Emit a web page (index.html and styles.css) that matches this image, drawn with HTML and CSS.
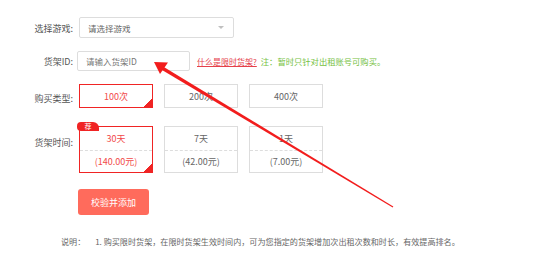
FILE: index.html
```html
<!DOCTYPE html>
<html lang="zh-CN">
<head>
    <meta charset="UTF-8">
    <title>购买限时货架</title>
    <link rel="stylesheet" href="styles.css">
</head>
<body>
    <div class="page">
        <div class="form-row row-game">
            <label class="form-label">选择游戏:</label>
            <div class="select">
                <span class="select-text">请选择游戏</span>
                <span class="caret"></span>
            </div>
        </div>

        <div class="form-row row-id">
            <label class="form-label">货架ID:</label>
            <input class="id-input" type="text" placeholder="请输入货架ID">
            <a class="help-link" href="#">什么是限时货架?</a>
            <span class="note">注：暂时只针对出租账号可购买。</span>
        </div>

        <div class="form-row row-type">
            <label class="form-label">购买类型:</label>
            <div class="option-list">
                <div class="option active">100次</div>
                <div class="option">200次</div>
                <div class="option">400次</div>
            </div>
        </div>

        <div class="form-row row-time">
            <label class="form-label">货架时间:</label>
            <div class="option-list">
                <div class="option time-option active">
                    <span class="badge">荐</span>
                    <div class="time-days">30天</div>
                    <div class="time-price">(140.00元)</div>
                </div>
                <div class="option time-option">
                    <div class="time-days">7天</div>
                    <div class="time-price">(42.00元)</div>
                </div>
                <div class="option time-option">
                    <div class="time-days">1天</div>
                    <div class="time-price">(7.00元)</div>
                </div>
            </div>
        </div>

        <button class="submit-btn" type="button">校验并添加</button>

        <p class="description">
            <span class="desc-title">说明：</span>
            <span>1. 购买限时货架，在限时货架生效时间内，可为您指定的货架增加次出租次数和时长，有效提高排名。</span>
        </p>

        <!-- annotation arrow drawn over the form -->
        <svg class="annotation" width="554" height="266" viewBox="0 0 554 266">
            <polygon points="161.2,69.5 163.0,66.5 393.3,206.4 392.7,207.4" fill="#f21d1d"/>
            <polygon points="154,62 168,62.5 160,74" fill="#f21d1d"/>
        </svg>
    </div>
</body>
</html>
```

FILE: styles.css
```css
body {
    margin: 0;
    font-family: "Noto Sans CJK SC", "Microsoft YaHei", sans-serif;
    color: #666;
    background-color: #fff;
}
.page {
    position: relative;
    width: 554px;
    height: 266px;
    padding-top: 17px;
    box-sizing: border-box;
}
.form-row {
    display: flex;
    align-items: flex-start;
}
.form-label {
    width: 73px;
    margin-right: 6px;
    text-align: right;
    font-size: 9px;
    color: #555;
}
.row-game {
    height: 21px;
    margin-bottom: 13px;
}
.row-game .form-label {
    line-height: 23px;
}
.select {
    width: 155px;
    height: 21px;
    box-sizing: border-box;
    border: 1px solid #ddd;
    border-radius: 2px;
    display: flex;
    align-items: center;
    justify-content: space-between;
    padding: 0 9px 0 8px;
    font-size: 8.5px;
    color: #666;
}
.caret {
    width: 0;
    height: 0;
    border-left: 3.5px solid transparent;
    border-right: 3.5px solid transparent;
    border-top: 3.5px solid #c0c0c0;
}
.row-id {
    height: 20px;
    margin-bottom: 13px;
    align-items: center;
}
.id-input {
    width: 113px;
    height: 20px;
    box-sizing: border-box;
    margin-left: -2px;
    border: 1px solid #ddd;
    border-radius: 2px;
    padding: 0 8px;
    font-family: inherit;
    font-size: 8.5px;
    color: #666;
    outline: none;
}
.id-input::placeholder {
    color: #777;
}
.help-link {
    margin-left: 7px;
    font-size: 8px;
    color: #e5404a;
    text-decoration: underline;
}
.note {
    margin-left: 4px;
    font-size: 8.3px;
    color: #76c13f;
}
.row-type {
    height: 24px;
    margin-bottom: 18px;
}
.row-type .form-label {
    line-height: 30px;
}
.option-list {
    display: flex;
    gap: 11px;
}
.option {
    position: relative;
    width: 74px;
    height: 24px;
    box-sizing: border-box;
    border: 1px solid #ddd;
    display: flex;
    align-items: center;
    justify-content: center;
    font-size: 9px;
    color: #666;
}
.option.active {
    border-color: #f02424;
    color: #f24a4a;
}
.option.active::after {
    content: "";
    position: absolute;
    right: 0;
    bottom: 0;
    width: 8px;
    height: 8px;
    background: linear-gradient(135deg, transparent 50%, #f02424 50%);
}
.row-time {
    height: 47px;
    margin-bottom: 16px;
}
.row-time .form-label {
    line-height: 34px;
}
.time-option {
    height: 47px;
    flex-direction: column;
    align-items: stretch;
}
.time-days {
    height: 23px;
    line-height: 23px;
    text-align: center;
    border-bottom: 1px dashed #ddd;
}
.time-price {
    flex: 1;
    display: flex;
    align-items: center;
    justify-content: center;
}
.badge {
    position: absolute;
    left: -3px;
    top: -5px;
    width: 22px;
    height: 9px;
    line-height: 9px;
    background-color: #f02424;
    color: #fff;
    font-size: 7px;
    text-align: center;
    border-radius: 4px 6px 0 4px;
}
.submit-btn {
    display: block;
    margin-left: 78px;
    width: 71px;
    height: 26px;
    border: none;
    border-radius: 3px;
    background-color: #ff6b5c;
    color: #fff;
    font-family: inherit;
    font-size: 9px;
    cursor: pointer;
}
.description {
    margin: 21px 0 0 61px;
    font-size: 8.1px;
    line-height: 12px;
    color: #666;
}
.desc-title {
    margin-right: 8px;
}
.annotation {
    position: absolute;
    left: 0;
    top: 0;
    pointer-events: none;
}
```
